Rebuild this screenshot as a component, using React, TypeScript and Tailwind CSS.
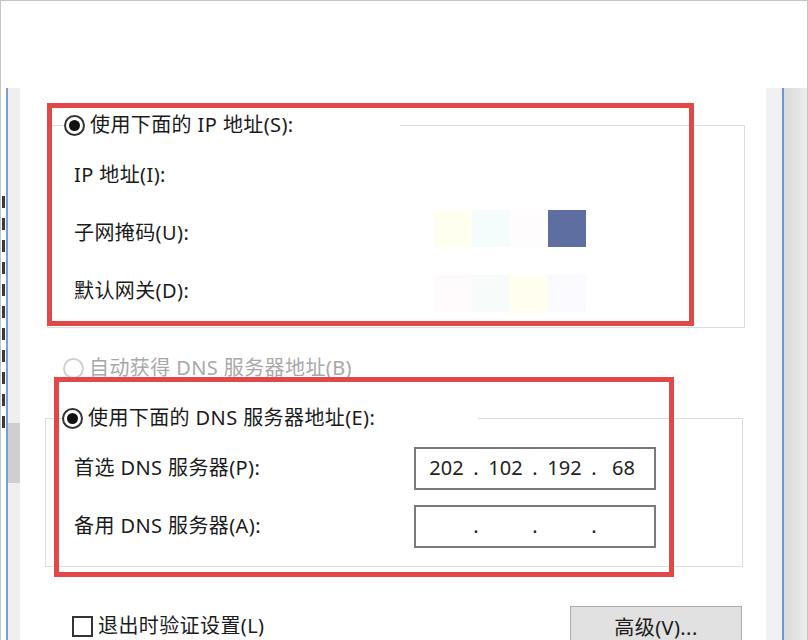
import React from "react";

const font = { fontFamily: '"Noto Sans", "Noto Sans CJK SC", sans-serif' };

function Radio({ checked, disabled }: { checked?: boolean; disabled?: boolean }) {
  return (
    <span
      className={
        "flex h-[21px] w-[21px] shrink-0 items-center justify-center rounded-full border-2 bg-white " +
        (disabled ? "border-[#d0d0d0]" : "border-[#333333]")
      }
    >
      {checked && <span className="h-[11px] w-[11px] rounded-full bg-[#111111]" />}
    </span>
  );
}

function Legend({ text, width }: { text: string; width: string }) {
  return (
    <legend className={"ml-[16px] flex h-[24px] items-center gap-[5px] bg-white " + width}>
      <Radio checked />
      <span className="whitespace-nowrap">{text}</span>
    </legend>
  );
}

function IpBox({ value }: { value: string[] }) {
  return (
    <div className="flex h-[43px] w-[242px] items-center border-2 border-[#7a7a7a] bg-white pl-[12px] text-[20px] tracking-normal text-[#222]">
      {value.map((part, i) => (
        <React.Fragment key={i}>
          <span className="w-[37px] text-center">{part}</span>
          {i < 3 && <span className="w-[22px] text-center">.</span>}
        </React.Fragment>
      ))}
    </div>
  );
}

const faint = ["bg-[#fffff0]", "bg-[#f4fcfc]", "bg-[#fffcfd]", "bg-[#5f6ea0]"];
const faint2 = ["bg-[#fffbfc]", "bg-[#f7fcfb]", "bg-[#fffeef]", "bg-[#fbfbff]"];
const marks = [108, 158, 178, 205, 228, 250, 282, 300, 360, 520, 538];

export default function App() {
  return (
    <div
      className="relative flex h-[640px] w-[808px] flex-col overflow-hidden border-x border-t border-[#c4c4c4] bg-white text-[20px] tracking-[0.4px] text-[#1b1b1b]"
      style={font}
    >
      <div className="h-[87px] shrink-0" />
      <div className="flex flex-1">
        {/* left edge of the window behind */}
        <div className="flex w-[19px] shrink-0">
          <div className="flex w-[5px] flex-col bg-white">
            {marks.map((m, i) => (
              <div
                key={i}
                className={"ml-[1px] h-[12px] w-[3px] bg-[#3a3a3a] " + (i === 0 ? "mt-[108px]" : "mt-[10px]")}
              />
            ))}
          </div>
          <div className="w-[2px] bg-[#77a0d6]" />
          <div className="flex flex-1 flex-col bg-[#efefef]">
            <div className="h-[335px]" />
            <div className="h-[60px] bg-[#cfcfcf]" />
          </div>
        </div>

        {/* dialog body */}
        <div className="relative flex flex-1 flex-col">
          <fieldset className="ml-[27px] mt-[25px] w-[698px] border border-[#dcdcdc] px-0 pb-[7px] pt-[9px]">
            <Legend text="使用下面的 IP 地址(S):" width="w-[336px]" />
            <div className="flex h-[58px] items-center pl-[26px]">IP 地址(I):</div>
            <div className="flex h-[58px] items-center pl-[26px]">
              <span className="w-[360px]">子网掩码(U):</span>
              <div className="-mt-[10px] flex">
                {faint.map((c, i) => (
                  <div key={i} className={"h-[37px] w-[38px] " + c} />
                ))}
              </div>
            </div>
            <div className="flex h-[58px] items-center pl-[26px]">
              <span className="w-[360px]">默认网关(D):</span>
              <div className="mt-[4px] flex">
                {faint2.map((c, i) => (
                  <div key={i} className={"h-[37px] w-[38px] " + c} />
                ))}
              </div>
            </div>
          </fieldset>

          <div className="ml-[43px] mt-[28px] flex h-[24px] items-center gap-[5px] text-[#a8a8a8]">
            <Radio disabled />
            <span>自动获得 DNS 服务器地址(B)</span>
          </div>

          <fieldset className="ml-[25px] mt-[26px] w-[698px] border border-[#dcdcdc] px-0 pb-[11px] pt-[9px]">
            <Legend text="使用下面的 DNS 服务器地址(E):" width="w-[416px]" />
            <div className="flex h-[58px] items-center pl-[28px]">
              <span className="w-[340px]">首选 DNS 服务器(P):</span>
              <IpBox value={["202", "102", "192", "68"]} />
            </div>
            <div className="flex h-[58px] items-center pl-[28px]">
              <span className="w-[340px]">备用 DNS 服务器(A):</span>
              <IpBox value={["", "", "", ""]} />
            </div>
          </fieldset>

          <div className="mt-[39px] flex items-start">
            <div className="ml-[52px] mt-[5px] flex items-center gap-[5px]">
              <span className="h-[21px] w-[21px] border-2 border-[#333] bg-white" />
              <span>退出时验证设置(L)</span>
            </div>
            <button className="ml-auto mr-[24px] flex h-[44px] w-[172px] items-center justify-center border border-[#adadad] bg-[#e1e1e1] text-[20px] text-[#1b1b1b]">
              高级(V)...
            </button>
          </div>

          {/* red annotation boxes */}
          <div className="pointer-events-none absolute left-[27px] top-[15px] h-[223px] w-[647px] border-[5px] border-[#e24848]" />
          <div className="pointer-events-none absolute left-[34px] top-[289px] h-[200px] w-[620px] border-[5px] border-[#e24848]" />
        </div>

        {/* right edge */}
        <div className="flex w-[41px] shrink-0">
          <div className="w-[16px] bg-[#f1f0f2]" />
          <div className="w-[2px] bg-[#6e98d0]" />
          <div className="flex-1 bg-gradient-to-r from-[#dadada] to-[#ececec]" />
        </div>
      </div>
    </div>
  );
}
